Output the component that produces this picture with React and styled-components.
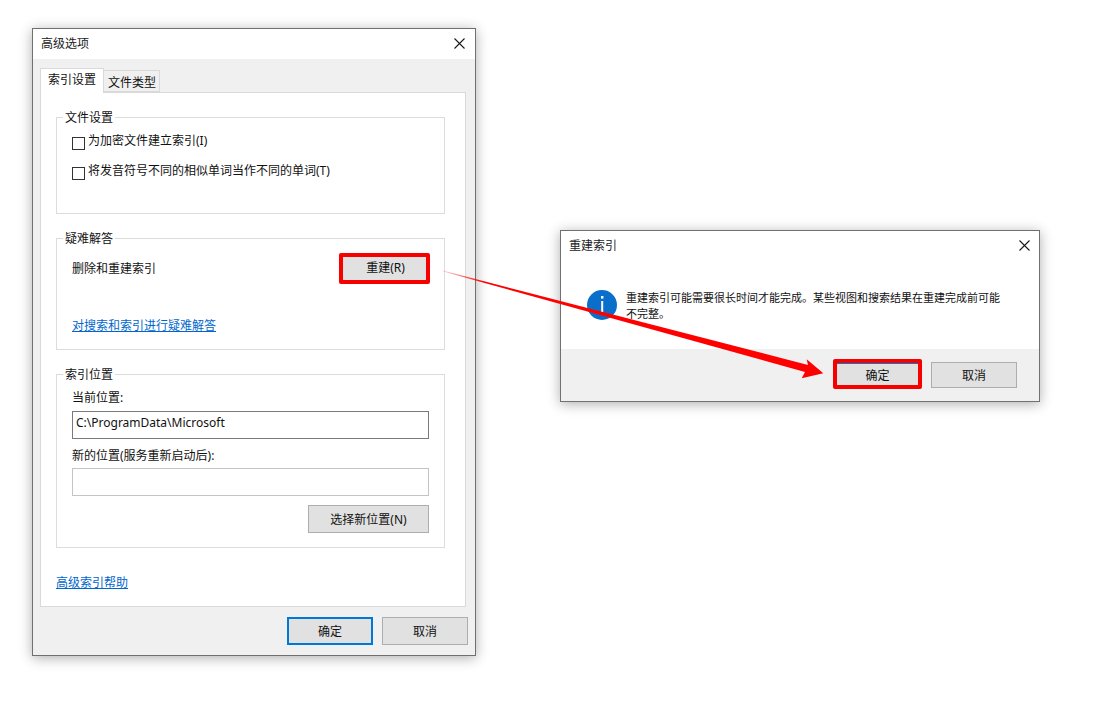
import React from "react";
import styled, { createGlobalStyle } from "styled-components";

const GlobalStyle = createGlobalStyle`
  html, body {
    margin: 0;
    padding: 0;
    background: #fff;
  }
  body {
    font-family: "Noto Sans", "Noto Sans CJK SC", sans-serif;
    font-size: 12px;
    color: #111;
  }
`;

const CloseIcon = () => (
  <svg width="11" height="11" viewBox="0 0 11 11" fill="none" stroke="#1a1a1a" strokeWidth="1.1">
    <path d="M0.5 0.5L10.5 10.5M10.5 0.5L0.5 10.5" />
  </svg>
);

const InfoIcon = () => (
  <svg width="30" height="30" viewBox="0 0 30 30">
    <circle cx="15" cy="15" r="15" fill="#0a6fcb" />
    <rect x="14" y="6" width="2.4" height="2.6" fill="#fff" />
    <rect x="14.2" y="11" width="2" height="12" fill="#fff" />
  </svg>
);

const App = () => {
  return (
    <Desktop>
      <GlobalStyle />
      <Window $width={444} $height={628}>
        <TitleBar $height={30} $bottom={2} $right={10}>
          高级选项
          <CloseIcon />
        </TitleBar>
        <WindowBody>
          <TabStrip>
            <Tab $active>索引设置</Tab>
            <Tab>文件类型</Tab>
          </TabStrip>
          <TabPanel>
            <Group $height={97}>
              <Legend>文件设置</Legend>
              <CheckRow>
                <CheckBox />
                为加密文件建立索引(I)
              </CheckRow>
              <CheckRow>
                <CheckBox />
                将发音符号不同的相似单词当作不同的单词(T)
              </CheckRow>
            </Group>
            <Group $height={112}>
              <Legend>疑难解答</Legend>
              <RebuildRow>
                删除和重建索引
                <RebuildButton $marked $w={91} $h={31}>重建(R)</RebuildButton>
              </RebuildRow>
              <HelpLink href="#troubleshoot">对搜索和索引进行疑难解答</HelpLink>
            </Group>
            <Group $height={174}>
              <Legend>索引位置</Legend>
              <FieldLabel>当前位置:</FieldLabel>
              <TextField>C:\ProgramData\Microsoft</TextField>
              <FieldLabel $next>新的位置(服务重新启动后):</FieldLabel>
              <TextField $disabled $tight />
              <FieldActions>
                <Button $w={121} $h={28}>选择新位置(N)</Button>
              </FieldActions>
            </Group>
            <FootLink href="#help">高级索引帮助</FootLink>
          </TabPanel>
          <Footer>
            <Button $default>确定</Button>
            <Button>取消</Button>
          </Footer>
        </WindowBody>
      </Window>

      <Dialog $width={480} $height={172}>
        <TitleBar $height={28} $bottom={0} $right={9}>
          重建索引
          <CloseIcon />
        </TitleBar>
        <Message>
          <InfoIcon />
          <MessageText>
            重建索引可能需要很长时间才能完成。某些视图和搜索结果在重建完成前可能不完整。
          </MessageText>
        </Message>
        <DialogFooter>
          <DialogConfirm $marked $focused $w={89} $h={30}>确定</DialogConfirm>
          <DialogCancel $h={26}>取消</DialogCancel>
        </DialogFooter>
      </Dialog>

      <ArrowLayer viewBox="0 0 1103 714" width="1103" height="714">
        <defs>
          <linearGradient id="tail" gradientUnits="userSpaceOnUse" x1="443" y1="271" x2="485" y2="282">
            <stop offset="0" stopColor="#ff0000" stopOpacity="0.15" />
            <stop offset="1" stopColor="#ff0000" />
          </linearGradient>
        </defs>
        <polygon
          fill="url(#tail)"
          points="443,270.6 808,365 806.7,359.3 823.3,373.3 801.7,378.3 805,372 443,271.4"
        />
      </ArrowLayer>
    </Desktop>
  );
};

export default App;

const Desktop = styled.div`
  position: relative;
  display: flex;
  align-items: flex-start;
  width: 1103px;
  height: 714px;
  padding: 28px 0 0 32px;
  box-sizing: border-box;
  overflow: hidden;
`;

const Window = styled.section`
  display: flex;
  flex-direction: column;
  flex: none;
  box-sizing: border-box;
  width: ${(p) => p.$width}px;
  height: ${(p) => p.$height}px;
  border: 1px solid #707070;
  background: #f0f0f0;
  box-shadow: 0 2px 12px rgba(0, 0, 0, 0.32);
`;

const Dialog = styled(Window)`
  margin: 202px 0 0 84px;
  background: #fff;
`;

const TitleBar = styled.header`
  display: flex;
  align-items: center;
  justify-content: space-between;
  flex: none;
  box-sizing: border-box;
  height: ${(p) => p.$height}px;
  padding: 0 ${(p) => p.$right}px ${(p) => p.$bottom}px 8px;
  background: #fff;
  color: #222;
`;

const WindowBody = styled.div`
  display: flex;
  flex-direction: column;
  flex: 1;
  padding: 9px 9px 0 7px;
`;

const TabStrip = styled.div`
  display: flex;
  align-items: flex-end;
  height: 24px;
`;

const Tab = styled.div`
  position: relative;
  z-index: ${(p) => (p.$active ? 1 : 0)};
  box-sizing: border-box;
  width: ${(p) => (p.$active ? 64 : 56)}px;
  height: ${(p) => (p.$active ? 25 : 22)}px;
  margin-bottom: ${(p) => (p.$active ? -1 : 0)}px;
  padding: ${(p) => (p.$active ? "2px 0 0 7px" : "3px 0 0 4px")};
  border: 1px solid #d9d9d9;
  border-bottom: ${(p) => (p.$active ? "none" : "1px solid #d9d9d9")};
  border-left: ${(p) => (p.$active ? "1px solid #d9d9d9" : "none")};
  background: ${(p) => (p.$active ? "#fff" : "#f0f0f0")};
  line-height: 18px;
`;

const TabPanel = styled.div`
  display: flex;
  flex-direction: column;
  gap: 24px;
  box-sizing: border-box;
  height: 515px;
  padding: 24px 20px 0 15px;
  border: 1px solid #d9d9d9;
  background: #fff;
`;

const Group = styled.div`
  position: relative;
  flex: none;
  box-sizing: border-box;
  height: ${(p) => p.$height}px;
  padding: 0 15px;
  border: 1px solid #dcdcdc;
`;

const Legend = styled.span`
  position: absolute;
  top: -9px;
  left: 6px;
  padding: 0 2px;
  background: #fff;
  line-height: 18px;
`;

const CheckRow = styled.label`
  display: flex;
  align-items: flex-start;
  gap: 3px;
  height: 18px;
  margin-top: 14px;
  line-height: 18px;

  & + & {
    margin-top: 12px;
  }
`;

const CheckBox = styled.span`
  flex: none;
  box-sizing: border-box;
  width: 13px;
  height: 13px;
  margin-top: 5px;
  border: 1px solid #333;
  background: #fff;
`;

const RebuildRow = styled.div`
  display: flex;
  align-items: flex-start;
  justify-content: space-between;
  height: 31px;
  margin: 14px -1px 0 0;
  line-height: 31px;
`;

const HelpLink = styled.a`
  display: block;
  margin-top: 33px;
  color: #0066cc;
  line-height: 18px;
  text-decoration: underline;
`;

const FootLink = styled(HelpLink)`
  margin-top: 2px;
`;

const FieldLabel = styled.div`
  margin-top: ${(p) => (p.$next ? 8 : 14)}px;
  line-height: 18px;
`;

const TextField = styled.div`
  box-sizing: border-box;
  height: 28px;
  margin-top: ${(p) => (p.$tight ? 3 : 4)}px;
  padding-left: 3px;
  border: 1px solid ${(p) => (p.$disabled ? "#c4c4c4" : "#7a7a7a")};
  background: #fff;
  line-height: 22px;
`;

const FieldActions = styled.div`
  display: flex;
  justify-content: flex-end;
  margin-top: 9px;
`;

const Footer = styled.footer`
  display: flex;
  justify-content: flex-end;
  gap: 9px;
  margin: 10px -2px 0 0;
`;

const Button = styled.button`
  flex: none;
  box-sizing: border-box;
  width: ${(p) => p.$w || 86}px;
  height: ${(p) => p.$h || 28}px;
  padding: 0;
  border: ${(p) =>
    p.$marked ? "4px solid #f60000" : p.$default ? "2px solid #0078d7" : "1px solid #adadad"};
  border-radius: ${(p) => (p.$marked ? 2 : 0)}px;
  background: #e1e1e1;
  box-shadow: ${(p) => (p.$focused ? "inset 0 1px 0 #0078d7" : "none")};
  color: #111;
  font: inherit;
`;

const RebuildButton = styled(Button)`
  padding: 0 0 2px 2px;
  line-height: 18px;
`;

const DialogConfirm = styled(Button)`
  padding-top: 2px;
`;

const DialogCancel = styled(Button)`
  margin-top: 3px;
`;

const Message = styled.div`
  display: flex;
  align-items: flex-start;
  flex: 1;
  gap: 9px;
  padding: 31px 0 0 26px;
`;

const MessageText = styled.p`
  width: 378px;
  margin: 0;
  font-size: 11px;
  line-height: 16px;
`;

const DialogFooter = styled.footer`
  display: flex;
  align-items: flex-start;
  justify-content: flex-end;
  flex: none;
  gap: 9px;
  height: 52px;
  padding: 10px 22px 0 0;
  box-sizing: border-box;
  background: #f0f0f0;
`;

const ArrowLayer = styled.svg`
  position: absolute;
  top: 0;
  left: 0;
  pointer-events: none;
`;
